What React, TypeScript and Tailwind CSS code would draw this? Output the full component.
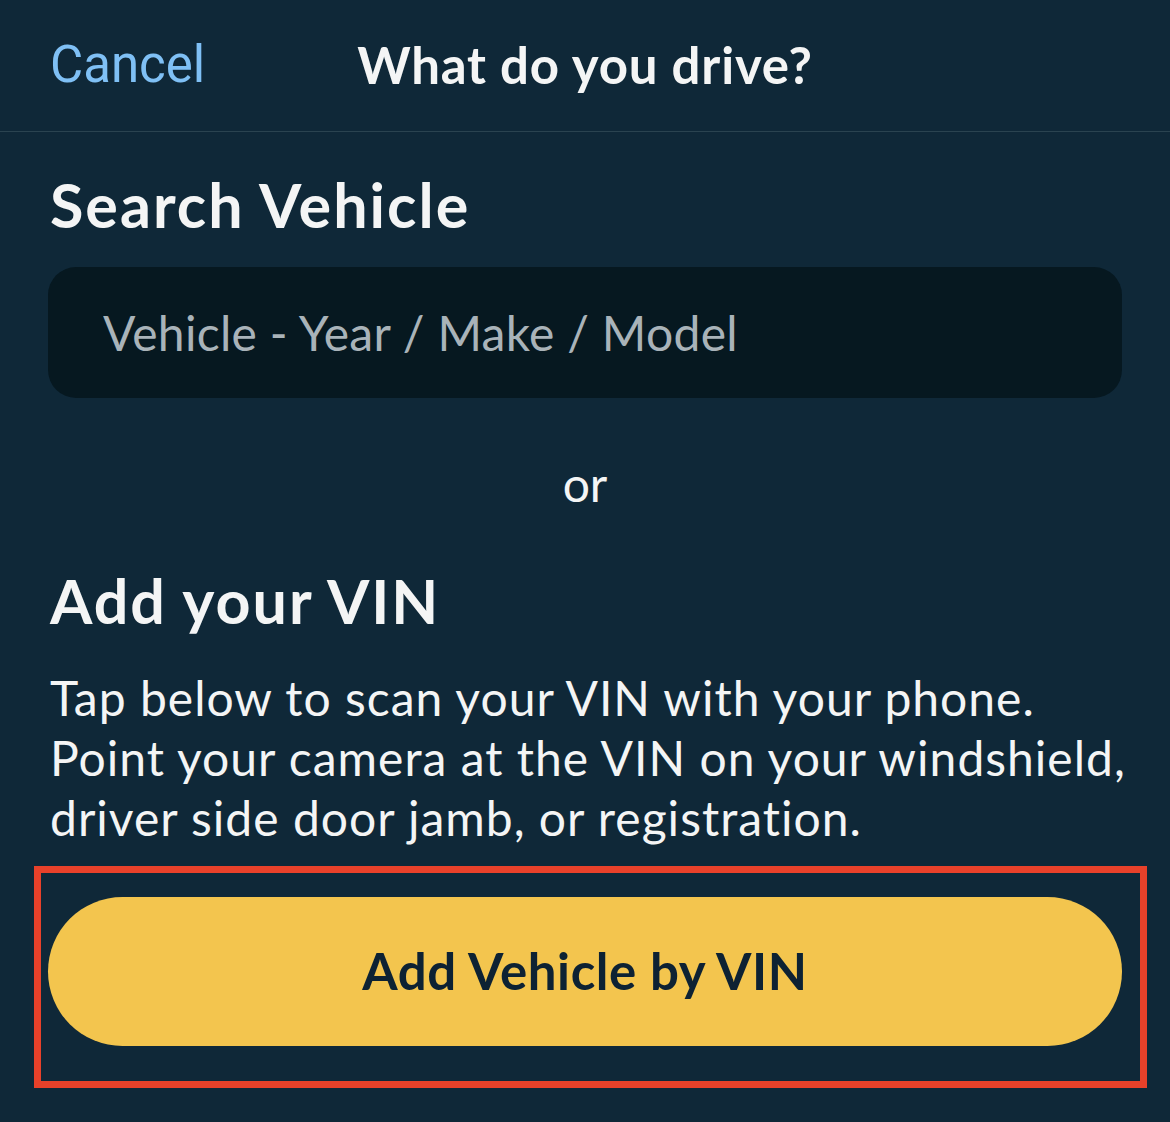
export default function App() {
  return (
    <div className="min-h-[1122px] w-full bg-[#0f2838] text-[#f4f5f5]" style={{ fontFamily: 'Lato, "Noto Sans", sans-serif' }}>
      <header className="relative flex h-[132px] items-center border-b border-[#2a4350] px-[50px]">
        <button className="text-[51px] font-normal text-[#7fc0f5]" style={{ fontFamily: 'Roboto, Inter, sans-serif' }}>
          Cancel
        </button>
        <h1 className="absolute left-0 right-0 pointer-events-none text-center text-[51px] font-bold tracking-[0.8px]">
          What do you drive?
        </h1>
      </header>

      <main className="flex flex-col px-[48px]">
        <h2 className="mt-[33px] px-[2px] text-[61px] font-bold leading-[80px] tracking-[2px]">Search Vehicle</h2>
        <div className="mt-[22px] flex h-[131px] items-center rounded-[28px] bg-[#061820] px-[55px]">
          <input
            className="w-full bg-transparent text-[48px] tracking-[0.3px] text-[#a9b3b9] placeholder:text-[#a9b3b9] outline-none"
            placeholder="Vehicle - Year / Make / Model"
          />
        </div>

        <p className="mt-[51px] text-center text-[48px] leading-[70px]">or</p>

        <h2 className="mt-[42px] px-[2px] text-[61px] font-bold leading-[80px] tracking-[2px]">Add your VIN</h2>
        <p className="mt-[27px] whitespace-nowrap px-[2px] text-[48px] leading-[60px] tracking-[1px]">
          Tap below to scan your VIN with your phone.
          <br />
          Point your camera at the VIN on your windshield,
          <br />
          driver side door jamb, or registration.
        </p>

        <div className="relative mt-[49px]">
          <button className="flex h-[149px] w-full items-center justify-center rounded-full bg-[#f3c54e] text-[51px] font-bold tracking-[0.6px] text-[#0d2233]">
            Add Vehicle by VIN
          </button>
          <div className="pointer-events-none absolute -left-[14px] -right-[25px] -top-[31px] -bottom-[42px] border-[7px] border-[#e8412a]" />
        </div>
      </main>
    </div>
  );
}
